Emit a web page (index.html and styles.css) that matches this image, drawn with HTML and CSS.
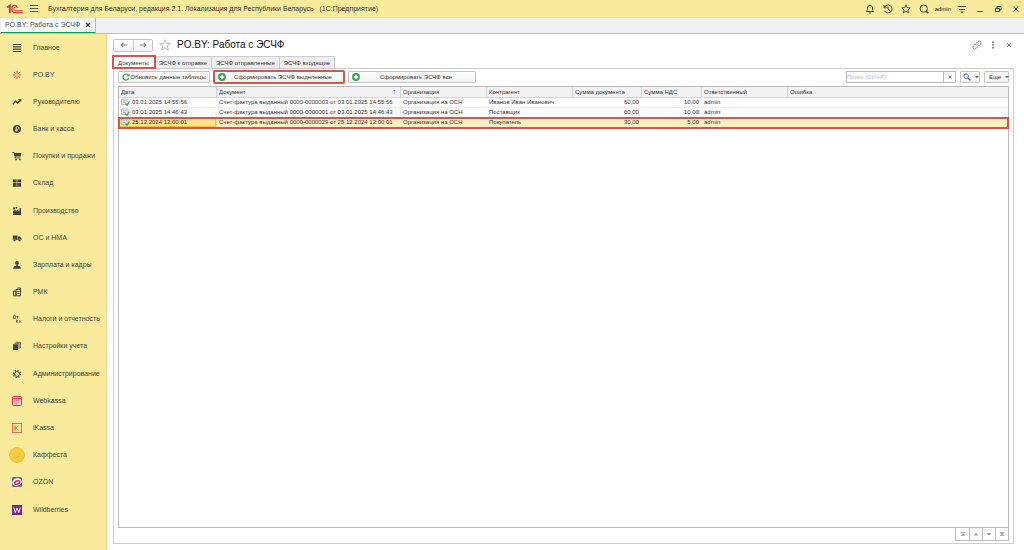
FILE: index.html
```html
<!DOCTYPE html>
<html lang="ru">
<head>
<meta charset="utf-8">
<title>PO.BY: Работа с ЭСЧФ</title>
<link rel="stylesheet" href="styles.css">
</head>
<body>
<div class="app">
  <header class="topbar">
    <svg class="logo" viewBox="0 0 16 10" fill="none" stroke="#dc3a32"><path d="M.3 3.600 2.900 1.500V9" stroke-width="1.900"/><path d="M10.300 3.700C9.800 2 8.900 1.300 7.700 1.300 5.900 1.300 4.900 3 4.900 5S6 8.700 7.900 8.700H15.700" stroke-width="1.300"/><path d="M8.900 4.200C8.600 3.600 8.200 3.400 7.700 3.400 7 3.400 6.700 4.200 6.700 5S7.200 6.700 8 6.700H15.700" stroke-width="1"/></svg>
    <button class="icon-btn menu" aria-label="Меню"><svg viewBox="0 0 10 10" stroke="#555" fill="none"><path d="M1 1.500H9M1 4.500H9M1 7.500H9"/></svg></button>
    <span class="app-title">Бухгалтерия для Беларуси, редакция 2.1. Локализация для Республики Беларусь &nbsp; (1С:Предприятие)</span>
    <div class="top-tools">
      <button class="icon-btn" aria-label="Уведомления"><svg viewBox="0 0 10 10" fill="none" stroke="#444"><path d="M1.500 7.500H8.500C7.500 6.500 7.500 5.500 7.500 4.200 7.500 2.500 6.500 1.500 5 1.500S2.500 2.500 2.500 4.200C2.500 5.500 2.500 6.500 1.500 7.500ZM5 .5V1.500M4 9H6"/></svg></button>
      <button class="icon-btn" aria-label="История"><svg viewBox="0 0 10 10" fill="none" stroke="#444"><path d="M1.300 3.500A4 4 0 1 1 1.500 6.800M1 1V3.800H3.800M5 2.500V5.200L7 6.500"/></svg></button>
      <button class="icon-btn" aria-label="Избранное"><svg viewBox="0 0 10 10" fill="none" stroke="#444" stroke-width=".9"><path d="M5 .8 6.200 3.700 9.300 3.900 6.900 5.900 7.700 9 5 7.300 2.300 9 3.100 5.900.7 3.900 3.800 3.700Z"/></svg></button>
      <button class="icon-btn" aria-label="Поиск"><svg viewBox="0 0 10 10" fill="none" stroke="#444"><circle cx="4.800" cy="4.600" r="3.700"/><path d="M7 7 9.300 9.300" stroke-width="1.600"/></svg></button>
      <span class="user">admin</span>
      <button class="icon-btn" aria-label="Сервис"><svg viewBox="0 0 10 10" fill="none" stroke="#444"><path d="M1 2.500H9M2 5.500H8"/><path d="M3.300 7.500H6.700L5 9.300Z" fill="#444" stroke="none"/></svg></button>
      <button class="icon-btn" aria-label="Свернуть"><svg viewBox="0 0 10 10" stroke="#444"><path d="M2.500 7.500H7.500"/></svg></button>
      <button class="icon-btn" aria-label="Развернуть"><svg viewBox="0 0 10 10" fill="none" stroke="#444"><path d="M2.500 4.500H6.500V7.500H2.500ZM4 4V2.500H8V6H7"/></svg></button>
      <button class="icon-btn" aria-label="Закрыть"><svg viewBox="0 0 10 10" stroke="#444"><path d="M2.500 2.500 7.500 7.500M7.500 2.500 2.500 7.500"/></svg></button>
    </div>
  </header>
  <div class="windows">
    <div class="window-tab">PO.BY: Работа с ЭСЧФ<button class="close" aria-label="Закрыть вкладку"><svg viewBox="0 0 6 6" stroke="#333" stroke-width="1.200"><path d="M1 1 5 5M5 1 1 5"/></svg></button></div>
  </div>
  <div class="body">
    <nav class="sidebar">
      <a href="#"><svg viewBox="0 0 10 10" stroke="#444" stroke-width="1.200"><path d="M1 1.500H9M1 3.800H9M1 6.200H9M1 8.500H9"/></svg>Главное</a>
      <a href="#"><svg viewBox="0 0 10 10" fill="none" stroke="#e03a3a"><path d="M5 .8V3.600M5 6.400V9.200M.8 5H3M7 5H9.200M1.900 2.200 3.700 3.900M8.100 2.200 6.300 3.900M1.900 7.800 3.700 6.100M8.100 7.800 6.300 6.100"/><path d="M4.500 5H5.500"/></svg>PO.BY</a>
      <a href="#"><svg viewBox="0 0 10 10" fill="none" stroke="#444" stroke-width="1.300"><path d="M.8 7.200 3.500 4.200 5.500 6 8.300 3"/><path d="M6 2H9.300V5.300Z" fill="#444" stroke="none"/></svg>Руководителю</a>
      <a href="#"><svg viewBox="0 0 10 10"><circle cx="5" cy="5" r="4" fill="#444"/><path d="M4.200 7.700V2.800H5.600A1.300 1.300 0 0 1 5.600 5.400H3.300M3.300 6.500H5.500" fill="none" stroke="#faeb9c" stroke-width=".8"/></svg>Банк и касса</a>
      <a href="#"><svg viewBox="0 0 10 10" fill="#444"><path d="M.5 1H2.300L2.700 2H9.500L8.600 5.600H3.600L3.800 6.400H8.600V7.200H3L1.700 1.900H.5Z"/><circle cx="4" cy="8.400" r=".9"/><circle cx="7.800" cy="8.400" r=".9"/></svg>Покупки и продажи</a>
      <a href="#"><svg viewBox="0 0 10 10" fill="#444"><path d="M1 1.500H4.700V4.500H1ZM5.300 1.500H9V4.500H5.300ZM1 5.100H4.700V8H1ZM5.300 5.100H9V8H5.300ZM.8 8.300H9.200V9H.8Z"/></svg>Склад</a>
      <a href="#"><svg viewBox="0 0 10 10" fill="#444"><path d="M1 9V5L3.700 3.500V5L6.300 3.500V5L7.500 4.500V2H9V9ZM1 1.500H3V3.500H1ZM3.500 1H5.300V2.500H3.500Z"/></svg>Производство</a>
      <a href="#"><svg viewBox="0 0 10 10" fill="#444"><path d="M.8 2.500H5.600V7H.8ZM6 3.500H8L9.500 5.200V7H6Z"/><circle cx="2.500" cy="7.300" r="1.200" stroke="#faeb9c" stroke-width=".4"/><circle cx="7.600" cy="7.300" r="1.200" stroke="#faeb9c" stroke-width=".4"/></svg>ОС и НМА</a>
      <a href="#"><svg viewBox="0 0 10 10" fill="#444"><circle cx="5" cy="2.900" r="1.900"/><path d="M4.300 4.500H5.700V5.800C8 6 8.800 6.800 8.800 8.700H1.200C1.200 6.800 2 6 4.300 5.800Z"/></svg>Зарплата и кадры</a>
      <a href="#"><svg viewBox="0 0 10 10" fill="none" stroke="#444"><path d="M1.500 4H4V8.800H1.500ZM4 2.500H8.500V8.800H4ZM5.500 1H8.500V3"/><path d="M5.300 4.500H7.500M5.300 6.500H7.500"/></svg>РМК</a>
      <a href="#"><svg viewBox="0 0 10 10" fill="none" stroke="#555" stroke-width=".8"><path d="M1.200 4.300 1.800 1.300H3.200V4.300M.8 4.300H3.800M4.300 2.300H6.500M5.400 2.300V4.300M4.500 5.500V8.700M6.300 5.700 4.600 7.100 6.300 8.700M7.200 6.300 9 8.700M9 6.300 7.200 8.700"/></svg>Налоги и отчетность</a>
      <a href="#"><svg viewBox="0 0 10 10" fill="#444"><path d="M1 3.200H6V9H1Z"/><path d="M2.300 2.300H7V8M3.600 1.300H8.400V7" fill="none" stroke="#444" stroke-width=".8"/></svg>Настройки учета</a>
      <a href="#"><svg viewBox="0 0 10 10" fill="none" stroke="#444"><circle cx="5" cy="5" r="2.400"/><circle cx="5" cy="5" r="3.500" stroke-width="1.200" stroke-dasharray="1.300 1.450"/></svg>Администрирование</a>
      <a href="#"><svg viewBox="0 0 10 10"><rect x=".5" y=".5" width="9" height="9" rx=".8" fill="#fbd5cf" stroke="#e8304c"/><path d="M1 2.600H9" stroke="#e8304c" stroke-width="1.200"/><path d="M2.500 4.500H7.500M2.500 6.200H7.500M2.500 7.900H5" stroke="#e8304c" stroke-width=".7" stroke-dasharray="1 .6"/></svg>Webkassa</a>
      <a href="#"><svg viewBox="0 0 10 10" fill="none" stroke="#dc7051"><rect x=".5" y=".5" width="9" height="9"/><path d="M3.500 2.500V7.500M7 2.500 3.800 5 7 7.500M2.200 2.500V7.500" stroke-width=".8"/></svg>iKassa</a>
      <a href="#"><svg class="large" viewBox="0 0 16 16"><circle cx="8" cy="8" r="7.500" fill="#f8cb3d" stroke="#d9ae45" stroke-width=".6"/><path d="M5.500 7V7.800M10.500 6V7M6 9.800C7.500 10.800 9 10.500 10 9.300" fill="none" stroke="#e0a92f" stroke-width=".7"/></svg>Каффеста</a>
      <a href="#"><svg viewBox="0 0 10 10"><rect width="10" height="10" rx="1.500" fill="#506fae"/><ellipse cx="5" cy="5" rx="4.700" ry="3.600" fill="#fff" transform="rotate(-20 5 5)"/><ellipse cx="5" cy="5.500" rx="2.700" ry="1.500" fill="none" stroke="#e62651" stroke-width="1.600" transform="rotate(-20 5 5)"/></svg>OZON</a>
      <a href="#"><svg viewBox="0 0 10 10"><rect width="10" height="10" fill="#7b2a83"/><path d="M1.800 2.500 3.200 7.500 5 3.200 6.800 7.500 8.200 2.500" fill="none" stroke="#fff"/></svg>Wildberries</a>
    </nav>
    <main class="main">
      <div class="page-head">
        <div class="history">
          <button aria-label="Назад"><svg viewBox="0 0 10 8" fill="none" stroke="#888" stroke-width="1.400"><path d="M9 4H1.500M4 1.500 1.500 4 4 6.500"/></svg></button>
          <button aria-label="Вперед"><svg viewBox="0 0 10 8" fill="none" stroke="#888" stroke-width="1.400"><path d="M1 4H8.500M6 1.500 8.500 4 6 6.500"/></svg></button>
        </div>
        <button class="icon-btn star" aria-label="В избранное"><svg viewBox="0 0 12 12" fill="#fff" stroke="#aaa" stroke-width=".8"><path d="M6 .8 7.400 4.500 11.300 4.700 8.300 7.100 9.300 11 6 8.800 2.700 11 3.700 7.100.7 4.700 4.600 4.500Z"/></svg></button>
        <h1>PO.BY: Работа с ЭСЧФ</h1>
        <div class="head-tools">
          <button class="icon-btn" aria-label="Ссылка"><svg viewBox="0 0 10 10" fill="none" stroke="#777" stroke-width=".9"><path d="M4.500 3 6 1.500A1.800 1.800 0 0 1 8.600 4.100L7 5.700A1.800 1.800 0 0 1 4.600 5.600M5.500 7 4 8.500A1.800 1.800 0 0 1 1.400 5.900L3 4.300A1.800 1.800 0 0 1 5.400 4.400"/></svg></button>
          <button class="icon-btn" aria-label="Еще"><svg viewBox="0 0 10 10" fill="#555"><path d="M4.300 1.500H5.700V3H4.300ZM4.300 4.300H5.700V5.800H4.300ZM4.300 7H5.700V8.500H4.300Z"/></svg></button>
          <button class="icon-btn" aria-label="Закрыть"><svg viewBox="0 0 10 10" stroke="#777"><path d="M3 3 7 7M7 3 3 7"/></svg></button>
        </div>
      </div>
      <div class="tabs" role="tablist">
        <button role="tab" class="tab active marked">Документы</button>
        <button role="tab" class="tab">ЭСЧФ к отправке</button>
        <button role="tab" class="tab">ЭСЧФ отправленные</button>
        <button role="tab" class="tab">ЭСЧФ входящие</button>
      </div>
      <section class="panel">
        <div class="toolbar">
          <button class="btn refresh"><svg viewBox="0 0 8 8" fill="none" stroke="#29a04a" stroke-width="1.200"><path d="M6.800 5A3 3 0 1 1 6 1.800"/><path d="M4.700 3.200H7.500V.4Z" fill="#29a04a" stroke="none"/></svg><span>Обновить данные таблицы</span></button>
          <button class="btn selected marked"><svg viewBox="0 0 8 8"><circle cx="4" cy="4" r="3.900" fill="#2f9e50"/><path d="M4 1.700V6.300M1.700 4H6.300" stroke="#fff" stroke-width="1.500"/></svg><span>Сформировать ЭСЧФ выделенные</span></button>
          <button class="btn all"><svg viewBox="0 0 8 8"><circle cx="4" cy="4" r="3.900" fill="#2f9e50"/><path d="M4 1.700V6.300M1.700 4H6.300" stroke="#fff" stroke-width="1.500"/></svg><span>Сформировать ЭСЧФ все</span></button>
          <div class="search"><input type="text" placeholder="Поиск (Ctrl+F)" aria-label="Поиск"><button aria-label="Очистить"><svg viewBox="0 0 6 6" stroke="#666" stroke-width=".9"><path d="M1.500 1.500 4.500 4.500M4.500 1.500 1.500 4.500"/></svg></button></div>
          <button class="btn find" aria-label="Найти"><svg viewBox="0 0 8 8" fill="none" stroke="#3c6eb4"><circle cx="3.200" cy="3.200" r="2.300"/><path d="M5 5 7.300 7.300" stroke-width="1.400"/></svg><i class="caret"></i></button>
          <button class="btn more">Еще<i class="caret"></i></button>
        </div>
        <div class="grid">
          <table>
            <colgroup><col class="c-date"><col class="c-doc"><col class="c-org"><col class="c-org"><col class="c-sum"><col class="c-vat"><col class="c-org"><col></colgroup>
            <thead><tr><th>Дата</th><th>Документ<span class="sort">↑</span></th><th>Организация</th><th>Контрагент</th><th>Сумма документа</th><th>Сумма НДС</th><th>Ответственный</th><th>Ошибка</th></tr></thead>
            <tbody>
              <tr><td><svg class="doc" viewBox="0 0 9 8"><path d="M.5 1H7V6.500H.5ZM2 2.700H5.500M2 4.500H5" fill="#eee" stroke="#aaa" stroke-width=".7"/><path d="M4.500 5.500 6 7.300 8.300 3.500" fill="none" stroke="#3aa655" stroke-width="1.300"/></svg>03.01.2025 14:55:56</td><td>Счет-фактура выданный 0000-0000003 от 03.01.2025 14:55:56</td><td>Организация на ОСН</td><td>Иванов Иван Иванович</td><td class="num">60,00</td><td class="num">10,00</td><td>admin</td><td></td></tr>
              <tr><td><svg class="doc" viewBox="0 0 9 8"><path d="M.5 1H7V6.500H.5ZM2 2.700H5.500M2 4.500H5" fill="#eee" stroke="#aaa" stroke-width=".7"/><path d="M4.500 5.500 6 7.300 8.300 3.500" fill="none" stroke="#3aa655" stroke-width="1.300"/></svg>03.01.2025 14:46:43</td><td>Счет-фактура выданный 0000-0000001 от 03.01.2025 14:46:43</td><td>Организация на ОСН</td><td>Поставщик</td><td class="num">60,00</td><td class="num">10,00</td><td>admin</td><td></td></tr>
              <tr class="current"><td><svg class="doc" viewBox="0 0 9 8"><path d="M.5 1H7V6.500H.5ZM2 2.700H5.500M2 4.500H5" fill="#eee" stroke="#aaa" stroke-width=".7"/><path d="M4.500 5.500 6 7.300 8.300 3.500" fill="none" stroke="#3aa655" stroke-width="1.300"/></svg>25.12.2024 12:00:01</td><td>Счет-фактура выданный 0000-0000029 от 25.12.2024 12:00:01</td><td>Организация на ОСН</td><td>Покупатель</td><td class="num">30,00</td><td class="num">5,00</td><td>admin</td><td></td></tr>
            </tbody>
          </table>
        </div>
        <div class="pager">
          <button aria-label="В начало"><svg viewBox="0 0 6 6" fill="#999"><path d="M1 1H5V1.800H1ZM3 2 5 4.200H1ZM1 4.400H5V5H1Z"/></svg></button>
          <button aria-label="Вверх"><svg viewBox="0 0 6 6" fill="#999"><path d="M3 1.800 5.200 4.500H.8Z"/></svg></button>
          <button aria-label="Вниз"><svg viewBox="0 0 6 6" fill="#999"><path d="M.8 2H5.200L3 4.700Z"/></svg></button>
          <button aria-label="В конец"><svg viewBox="0 0 6 6" fill="#999"><path d="M.8 1.300H5.200V2H.8ZM1 2.200H5L3 4.200ZM1 4.300H5V5H1Z"/></svg></button>
        </div>
      </section>
    </main>
  </div>
</div>
</body>
</html>
```
FILE: styles.css
```css
* { box-sizing: border-box; }
body { margin: 0; font: 7px/10px "Liberation Sans", Arial, sans-serif; color: #444; background: #fff; }
button, input { font: inherit; color: inherit; margin: 0; padding: 0; }
button { border: 0; background: none; }
svg { display: block; flex: none; }
.app { display: flex; flex-direction: column; min-height: 100vh; }

.topbar { display: flex; align-items: center; height: 17px; padding: 0 3px 0 7px; background: #faeb9c; }
.logo { width: 16px; height: 10px; }
.icon-btn { display: flex; align-items: center; justify-content: center; width: 10px; height: 10px; }
.icon-btn svg { width: 10px; height: 10px; }
.menu { margin-left: 6px; }
.app-title { margin-left: 9px; white-space: nowrap; color: #333; }
.top-tools { display: flex; align-items: center; gap: 8px; margin-left: auto; }
.user { margin: 0 -2px; font-size: 6px; color: #222; }

.windows { display: flex; height: 17px; background: #f0f0f0; border-top: 1px solid #ddd; border-bottom: 1px solid #c0c0c0; }
.window-tab { display: flex; align-items: center; gap: 5px; margin-left: 1px; padding: 0 4px; background: #fff; border-right: 1px solid #bbb; border-bottom: 1px solid #159957; }
.close svg { width: 6px; height: 6px; }

.body { display: flex; flex: 1; }
.sidebar { display: flex; flex-direction: column; flex: none; width: 107px; padding-bottom: 27px; background: #faeb9c; border-right: 1px solid #e8d88c; }
.sidebar a { display: flex; flex: 1; align-items: center; gap: 11px; padding-left: 12px; color: #444; text-decoration: none; white-space: nowrap; }
.sidebar svg { width: 10px; height: 10px; }
.sidebar .large { width: 16px; height: 16px; margin: 0 -3px; }

.main { display: flex; flex: 1; flex-direction: column; min-width: 0; padding: 0 10px 6px 6px; }
.page-head { display: flex; align-items: center; height: 22px; }
.history { display: flex; border: 1px solid #c4c4c4; border-radius: 2px; background: linear-gradient(#fff, #f2f2f2); }
.history button { display: flex; align-items: center; justify-content: center; width: 19px; height: 11px; }
.history button + button { border-left: 1px solid #ccc; }
.history svg { width: 8px; height: 8px; }
.star { margin-left: 6px; }
.icon-btn.star, .star svg { width: 12px; height: 12px; }
h1 { margin: 0 0 0 6px; font-size: 10px; font-weight: 400; color: #111; }
.head-tools { display: flex; gap: 6px; margin-left: auto; }

.tabs, .panel { font-size: 6px; color: #333; }
.tabs { display: flex; height: 12px; }
.tab { padding: 0 4px; background: #eee; border: 1px solid #ccc; border-width: 1px 1px 0 0; }
.tab.active { padding: 0 5px; background: #fff; }
.marked { position: relative; outline: 2px solid #d9544a; outline-offset: -1px; }
.panel { display: flex; flex: 1; flex-direction: column; padding: 2px 4px; border: 1px solid #ccc; }
.toolbar { display: flex; align-items: center; gap: 4px; margin-bottom: 3px; }
.btn { display: flex; align-items: center; height: 12px; padding: 0 3px; border: 1px solid #c4c4c4; border-radius: 1px; background: linear-gradient(#fff, #f2f2f2); white-space: nowrap; }
.btn > svg { width: 8px; height: 8px; }
.btn span { flex: 1; text-align: center; }
.refresh { width: 92px; }
.selected { width: 130px; }
.all { width: 128px; }
.caret { margin-left: 4px; border: 2px solid transparent; border-top-color: #555; border-bottom: 0; }
.search { display: flex; width: 110px; height: 12px; margin-left: auto; border: 1px solid #bbb; }
.search input { flex: 1; min-width: 0; border: 0; outline: 0; }
.search input::placeholder { color: #bbb; }
.search button { display: flex; align-items: center; justify-content: center; width: 12px; border-left: 1px solid #bbb; }
.search svg { width: 6px; height: 6px; }
.find { width: 20px; padding: 0 2px; }
.more { width: 25px; padding: 0 4px; }

.grid { flex: 1; border: 1px solid #bbb; }
table { width: 100%; table-layout: fixed; border-collapse: separate; border-spacing: 0; }
.c-date { width: 98px; }
.c-doc { width: 184px; }
.c-org { width: 86px; }
.c-sum { width: 69px; }
.c-vat { width: 60px; }
th, td { padding: 0 2px; text-align: left; font-weight: 400; line-height: 9px; white-space: nowrap; border-right: 1px solid #e4e4e4; border-bottom: 1px solid #eee; }
th { line-height: 10px; background: #f2f2f2; border-color: #d4d4d4; }
td { border-right-color: transparent; }
th:last-child, td:last-child { border-right: 0; }
.sort { float: right; padding-right: 2px; font-size: 7px; color: #222; }
.num { text-align: right; }
.doc { display: inline-block; width: 9px; height: 8px; margin-right: 2px; vertical-align: top; }
tbody tr:nth-child(2) { background: #fafafa; }
.current { background: #fff0c4; outline: 2px solid #d9544a; outline-offset: -1px; }
.current td { border-bottom-color: transparent; }
.current td:first-child { background: #ffe28a; box-shadow: inset 0 0 0 1px #efc13a; }
.pager { display: flex; align-self: flex-end; border: 1px solid #bbb; border-top: 0; }
.pager button { display: flex; align-items: center; justify-content: center; width: 13px; height: 12px; }
.pager button + button { border-left: 1px solid #bbb; }
.pager svg { width: 6px; height: 6px; }
```
